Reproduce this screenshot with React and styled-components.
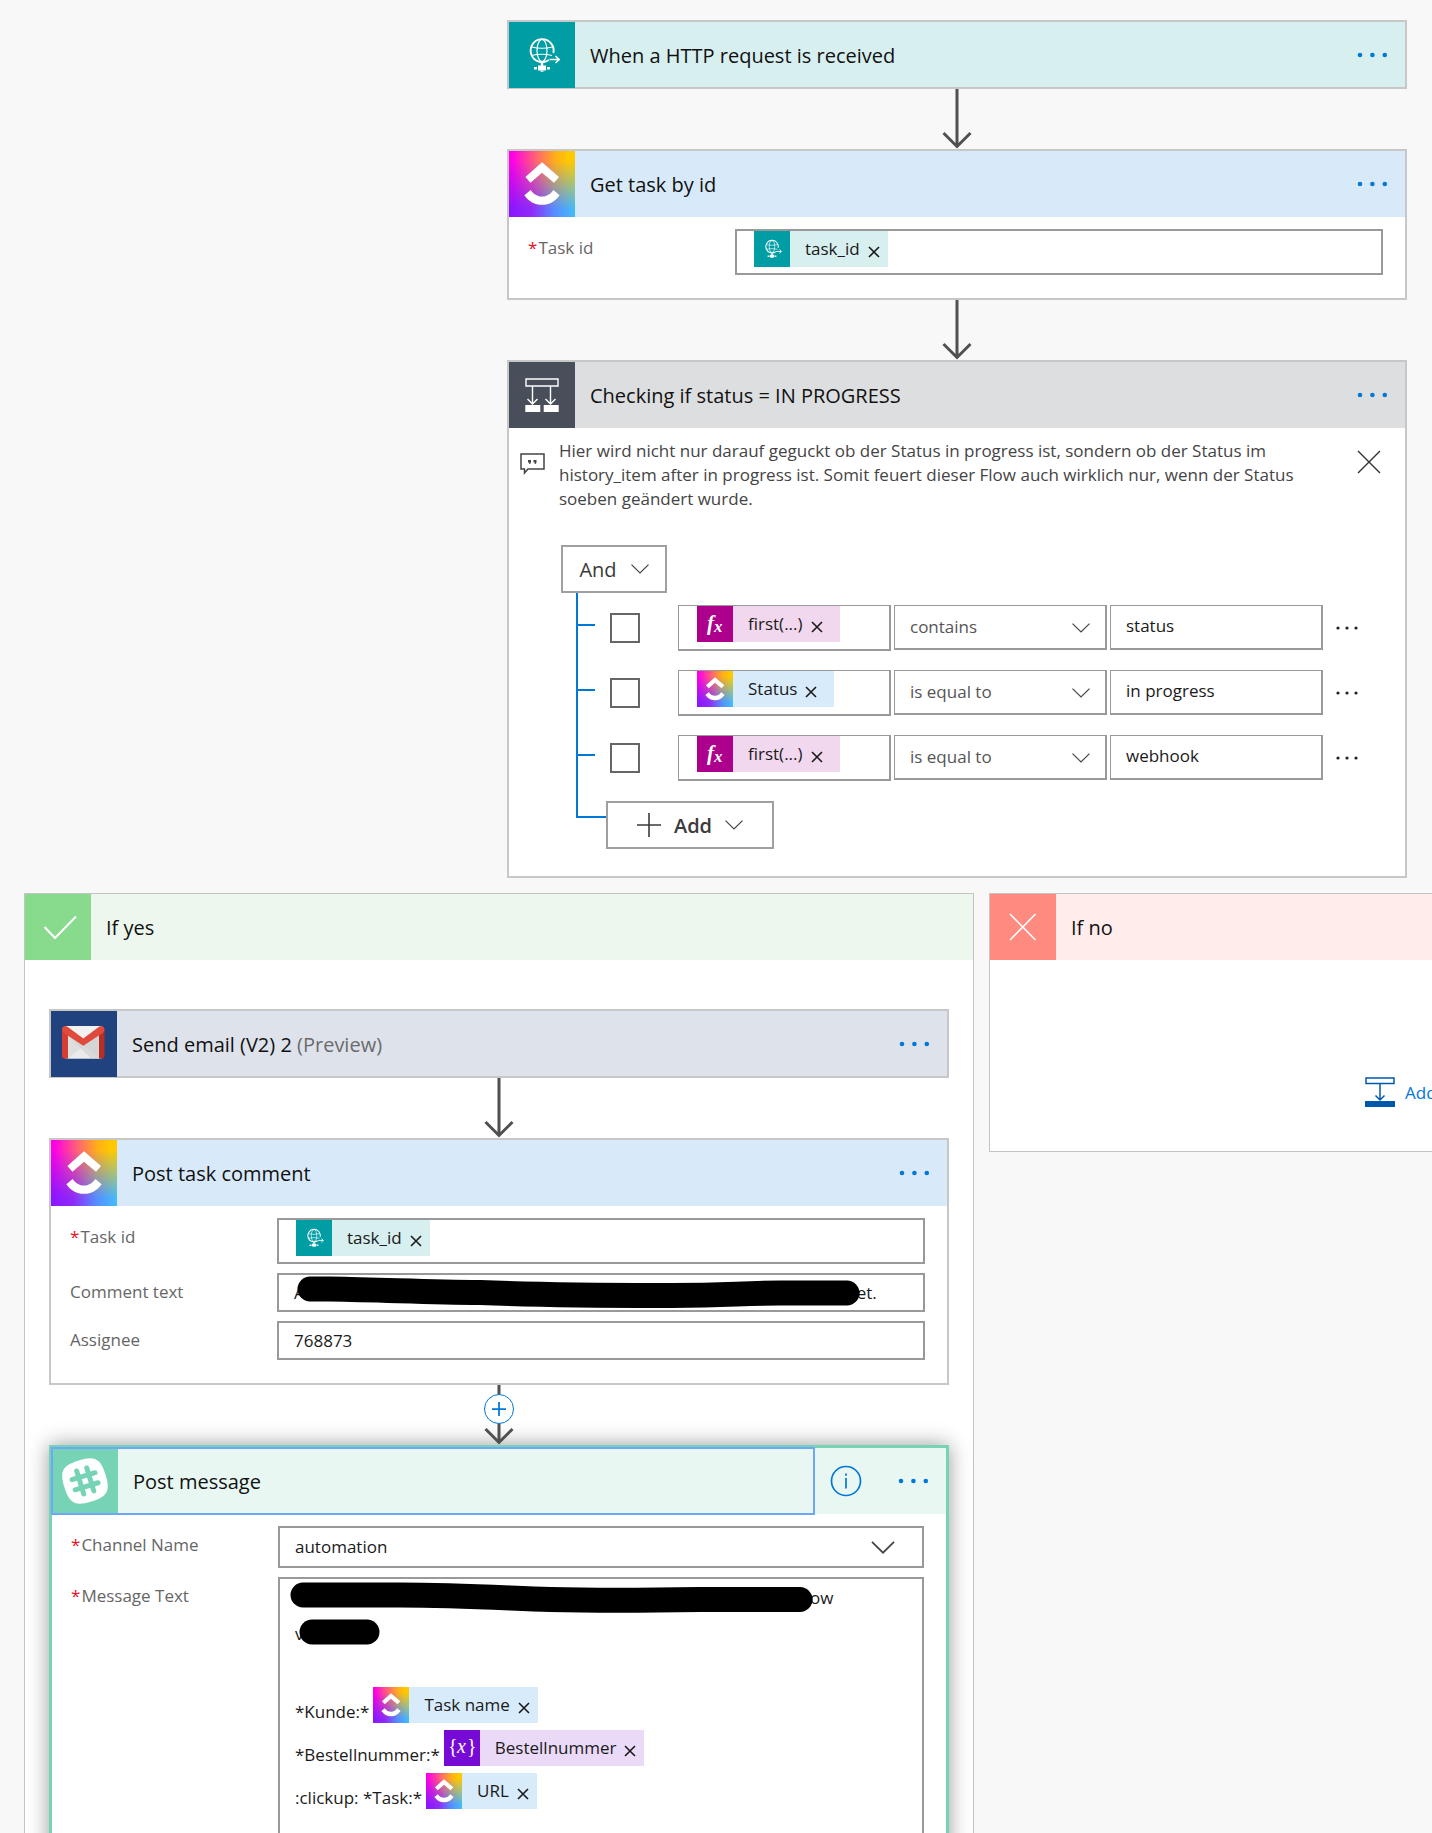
import React, { useState } from 'react';
import styled, { createGlobalStyle, css } from 'styled-components';

const GlobalStyle = createGlobalStyle`
  * {
    box-sizing: border-box;
  }

  body {
    margin: 0;
    background-color: #f8f8f8;
    color: #1a1a1a;
    font-family: 'Open Sans', 'Noto Sans', sans-serif;
    font-size: 17px;
  }

  button, input, select {
    font: inherit;
    color: inherit;
    margin: 0;
  }
`;

const Viewport = styled.main`
  height: 100vh;
  overflow: auto;
  scrollbar-width: none;
`;

const Canvas = styled.div`
  display: flex;
  flex-direction: column;
  width: max-content;
  min-width: 100%;
  padding: 20px 24px;
`;

const Steps = styled.div`
  display: flex;
  flex-direction: column;
  align-items: center;
`;

const Card = styled.section`
  width: 900px;
  background-color: #fff;
  border: 2px solid #c7c7c7;

  ${({ $active }) => $active && css`
    border: 3px solid #77d3b5;
    box-shadow: 0 0 20px rgba(0, 0, 0, 0.4);
  `}
`;

const CardHeader = styled.header`
  display: flex;
  align-items: center;
  height: ${({ $flat }) => ($flat ? '65px' : '66px')};
  padding-right: 15px;
  background-color: ${({ $color }) => $color};
`;

const HeaderToggle = styled.button`
  display: flex;
  flex: 1;
  align-items: center;
  align-self: stretch;
  padding: 0;
  border: none;
  background: none;
  text-align: left;
  cursor: pointer;

  ${({ $focused }) => $focused && css`
    outline: 2px solid #6ea6fa;
    outline-offset: -1px;
    margin-right: 16px;
  `}
`;

const IconBox = styled.span`
  display: flex;
  flex: none;
  align-items: center;
  justify-content: center;
  width: ${({ $size }) => $size || 66}px;
  height: ${({ $size }) => $size || 66}px;
  background-color: ${({ $color }) => $color};

  svg {
    width: 100%;
    height: 100%;
  }
`;

const GradientBox = styled(IconBox)`
  position: relative;
  background: linear-gradient(to right, #8a14ff 0%, #8f2cf8 35%, #558cff 68%, #45bdfa 100%);

  &::before {
    content: '';
    position: absolute;
    inset: 0;
    background: linear-gradient(to right, #ff00e6 5%, #ff6f66 45%, #ffae18 70%, #ffc800 90%);
    mask-image: linear-gradient(to bottom, #000 15%, transparent 88%);
  }

  svg {
    position: relative;
  }
`;

const Title = styled.span`
  padding: 2px 0 0 15px;
  font-size: 20px;
  line-height: 28px;
  color: #111;
`;

const Muted = styled.span`
  color: #6b6b6b;
`;

const IconButton = styled.button`
  display: flex;
  align-items: center;
  justify-content: center;
  padding: 0;
  border: none;
  background: none;
  color: ${({ $color }) => $color || '#0078d7'};
  cursor: pointer;
`;

const InfoButton = styled(IconButton)`
  margin-right: 35px;
`;

const CardBody = styled.div`
  display: flex;
  flex-direction: column;
  gap: 9px;
  padding: 12px 22px 23px 19px;
`;

const FieldRow = styled.div`
  display: flex;
  align-items: flex-start;
`;

const FieldLabel = styled.label`
  width: 207px;
  flex: none;
  padding-top: 8px;
  line-height: 22px;
  color: #666;
`;

const Required = styled.span`
  padding-right: 1px;
  color: #e81123;
`;

const boxStyle = css`
  flex: 1;
  min-width: 0;
  border: 2px solid #999;
  border-radius: 0;
  background-color: #fff;
`;

const TextInput = styled.input`
  ${boxStyle}
  height: 39px;
  padding: 0 15px;
`;

const TokenField = styled.div`
  ${boxStyle}
  display: flex;
  align-items: flex-start;
  height: 46px;
  padding-left: 17px;
`;

const LineField = styled.div`
  ${boxStyle}
  height: 39px;
  padding: 0 15px;
  line-height: 35px;
`;

const MessageField = styled.div`
  ${boxStyle}
  min-height: 420px;
  padding: 1px 15px;
`;

const MessageLine = styled.div`
  display: flex;
  align-items: center;
  height: 36px;
  line-height: 22px;
`;

const TokenLines = styled.div`
  margin-top: 28px;
`;

const TokenLine = styled.div`
  display: flex;
  align-items: flex-end;
  gap: 4px;
  height: 43px;
  line-height: 22px;
`;

const TokenPill = styled.span`
  display: inline-flex;
  align-items: center;
  height: 36px;
  padding-right: ${({ $roomy }) => ($roomy ? 17 : 8)}px;
  background-color: ${({ $color }) => $color};
`;

const TokenName = styled.span`
  padding: 0 8px 0 15px;
  line-height: 22px;
`;

const RemoveButton = styled(IconButton)`
  width: 12px;
  height: 12px;
  margin-top: 6px;
`;

const SelectWrap = styled.div`
  position: relative;
  display: flex;
  flex: 1;
  min-width: 0;
`;

const Select = styled.select`
  ${boxStyle}
  appearance: none;
  height: 42px;
  padding: 0 15px 2px;
`;

const SelectArrow = styled.span`
  position: absolute;
  top: 0;
  bottom: 0;
  right: ${({ $right }) => $right}px;
  display: flex;
  align-items: center;
  pointer-events: none;
`;

const ScribbleSvg = styled.svg`
  position: relative;
  flex: none;
  vertical-align: top;
  margin-left: ${({ $overlap }) => -$overlap}px;
  margin-right: -3px;
`;

const ArrowWrap = styled.div`
  position: relative;
  height: 60px;
`;

const InsertButton = styled.button`
  position: absolute;
  top: 9px;
  left: 50%;
  display: flex;
  align-items: center;
  justify-content: center;
  width: 30px;
  height: 30px;
  margin-left: -15px;
  padding: 0;
  border: 1px solid #0078d7;
  border-radius: 50%;
  background-color: #fff;
  color: #0078d7;
`;

const Note = styled.div`
  display: flex;
  align-items: flex-start;
  padding: 11px 24px 34px 11px;
`;

const NoteText = styled.p`
  flex: 1;
  margin: 0 53px 0 14px;
  line-height: 24px;
  color: #444;
`;

const NoteIcon = styled.span`
  display: flex;
  padding-top: 14px;
`;

const NoteClose = styled(IconButton)`
  padding-top: 11px;
`;

const ConditionGroup = styled.div`
  padding: 0 46px 27px 52px;
`;

const OutlineButton = styled.button`
  display: flex;
  align-items: center;
  justify-content: center;
  gap: ${({ $gap }) => $gap}px;
  width: ${({ $width }) => $width}px;
  height: 48px;
  padding: 0;
  border: 2px solid #a0a0a0;
  background-color: #fff;
  color: #3b3b3b;
  font-size: 20px;
  font-weight: ${({ $strong }) => ($strong ? 600 : 400)};
`;

const Rows = styled.div`
  display: flex;
  flex-direction: column;
  gap: 19px;
  margin-left: 15px;
  padding: 12px 0 20px;
  border-left: 2px solid #0078d7;
`;

const ConditionRow = styled.div`
  display: flex;
  align-items: center;
`;

const Tick = styled.span`
  align-self: flex-start;
  width: 17px;
  height: 2px;
  margin-top: 19px;
  background-color: #0078d7;
`;

const CheckBox = styled.input`
  appearance: none;
  width: 30px;
  height: 30px;
  margin: 0 38px 0 15px;
  border: 2px solid #666;
  background-color: #fff;
`;

const Operands = styled.div`
  display: grid;
  flex: 1;
  grid-template-columns: repeat(3, 1fr);
  align-items: start;
  gap: 3px;
  margin-right: 12px;
`;

const OperandTokens = styled(TokenField)`
  border-width: 1px 2px 2px 1px;
  padding-left: 18px;
`;

const OperandSelect = styled(Select)`
  height: 45px;
  border-width: 1px 2px 2px 1px;
  color: #555;
`;

const OperandInput = styled(TextInput)`
  height: 45px;
  padding: 0 15px 4px;
  border-width: 1px 2px 2px 1px;
`;

const AddRow = styled.div`
  display: flex;
  margin-left: 15px;
`;

const Elbow = styled.span`
  width: 30px;
  height: 17px;
  border-left: 2px solid #0078d7;
  border-bottom: 2px solid #0078d7;
`;

const Branches = styled.div`
  display: flex;
  align-items: flex-start;
  gap: 15px;
  margin-top: 15px;
`;

const Branch = styled.section`
  flex: 1;
  min-width: ${({ $minWidth }) => $minWidth}px;
  border: 1px solid #c4c4c4;
  background-color: #fff;
`;

const BranchHeader = styled.header`
  display: flex;
  align-items: center;
  background-color: ${({ $color }) => $color};
`;

const BranchBody = styled.div`
  padding: 49px 24px 44px;
`;

const AddAction = styled.button`
  display: flex;
  align-items: center;
  gap: 10px;
  margin: 68px auto 0;
  padding: 0;
  border: none;
  background: none;
  color: #0078d7;
`;

const MoreDots = () => (
  <svg width="34" height="8" viewBox="0 0 34 8" fill="currentColor">
    <circle cx="4" cy="4" r="2.3" />
    <circle cx="16.4" cy="4" r="2.3" />
    <circle cx="28.8" cy="4" r="2.3" />
  </svg>
);

const SmallDots = () => (
  <svg width="24" height="6" viewBox="0 0 24 6" fill="currentColor">
    <circle cx="3" cy="3" r="1.6" />
    <circle cx="12" cy="3" r="1.6" />
    <circle cx="21" cy="3" r="1.6" />
  </svg>
);

const Chevron = ({ size = 18, strokeWidth = 1.2 }) => (
  <svg width={size} height={size / 2 + 1} viewBox="0 0 18 10" fill="none" stroke="#444" strokeWidth={strokeWidth}>
    <path d="M0.5 0.6 9 9 17.5 0.6" />
  </svg>
);

const Cross = ({ size, strokeWidth }) => (
  <svg width={size} height={size} viewBox={`0 0 ${size} ${size}`} fill="none" stroke="currentColor" strokeWidth={strokeWidth}>
    <path d={`M1 1 ${size - 1} ${size - 1}M${size - 1} 1 1 ${size - 1}`} />
  </svg>
);

const Plus = ({ size, strokeWidth }) => (
  <svg width={size} height={size} viewBox="0 0 24 24" fill="none" stroke="currentColor" strokeWidth={strokeWidth}>
    <path d="M12 0v24M0 12h24" />
  </svg>
);

const GlobeIcon = () => (
  <svg viewBox="0 0 66 66" fill="none" stroke="#fff" strokeWidth="1.2">
    <path d="M39.8 38A11.5 11.5 0 1 1 44.4 31" strokeWidth="1.9" />
    <ellipse cx="33" cy="28.5" rx="5" ry="11" />
    <path d="M22.5 25Q33 27.5 43.5 25M22.5 33.5Q33 31 43 33.5" />
    <path d="M40.5 37.5H50M46.5 34 50.2 37.5 46.5 41" strokeWidth="1.6" />
    <path d="M33 40v4" strokeWidth="2.4" />
    <path d="M29 43.5h8v5h-8zM25 45h3v2.6h-3zM38 45h3v2.6h-3z" fill="#fff" stroke="none" />
    <path d="M31.5 48.5h3v1.2h-3z" fill="#fff" stroke="none" />
  </svg>
);

const ClickUpGlyph = () => (
  <svg viewBox="0 0 66 66" fill="#fff">
    <path d="M33 11.3 50 26 45 31.8 33 21.7 21.5 31.8 16.4 26Z" />
    <path d="M15.4 44.2 21.7 39C24.5 43.2 28.5 45.6 33 45.6S41.6 43.2 44.4 39L50.6 44.2C46.2 50.6 40.2 53.8 33 53.8S19.8 50.6 15.4 44.2Z" />
  </svg>
);

const ConditionIcon = () => (
  <svg viewBox="0 0 66 66" fill="none" stroke="#fff" strokeWidth="1.4">
    <path d="M17 17h32v7H17z" />
    <path d="M23.5 24v18M18.5 37l5 5 5-5M41.5 24v18M36.5 37l5 5 5-5" />
    <path d="M16.3 43h15v7h-15zM34.7 43h15v7h-15z" fill="#fff" stroke="none" />
  </svg>
);

const GmailIcon = () => (
  <svg viewBox="0 0 66 66">
    <path d="M14 15h37v32.5H14z" fill="#dedede" />
    <path d="M16.5 47.5 33 35l16 12.5z" fill="#ebebeb" />
    <path d="M16.5 24 40 47.5h9V23L33 34z" fill="#cfcfcf" opacity="0.6" />
    <path d="M14 15h36L32.5 28z" fill="#f2f2f2" />
    <path d="M11 18.5V45a2.5 2.5 0 0 0 2.5 2.5H17V22z" fill="#d43d31" />
    <path d="M53.5 18.5V45a2.5 2.5 0 0 1-2.5 2.5h-3V22z" fill="#b52f25" />
    <path d="M11 18.5c0-3.5 3-4.5 5.500-2.800L32.300 27.500 48 15.700c2.500-1.700 5.500-.7 5.500 2.800 0 1.500-.8 2.700-1.800 3.500L32.300 34.800 12.800 22C11.700 21.200 11 20 11 18.500z" fill="#e04a3c" />
  </svg>
);

const SlackIcon = () => (
  <svg viewBox="0 0 66 66">
    <g transform="rotate(-17 33 33)">
      <path d="M33 11.5C50 11.5 54.5 16 54.5 33S50 54.5 33 54.5 11.5 50 11.5 33 16 11.5 33 11.5z" fill="#fff" />
      <path d="M28 21v24M38.5 21v24M21 28h24M21 38.5h24" stroke="#77d3b5" strokeWidth="5" strokeLinecap="round" />
    </g>
  </svg>
);

const CheckIcon = () => (
  <svg viewBox="0 0 66 66" fill="none" stroke="#fff" strokeWidth="2">
    <path d="M19.5 33 30 44 51 22.5" />
  </svg>
);

const RejectIcon = () => (
  <svg viewBox="0 0 66 66" fill="none" stroke="#fff" strokeWidth="1.6">
    <path d="M20 20 45.5 46M45.5 20 20 46" />
  </svg>
);

const FunctionIcon = () => (
  <svg viewBox="0 0 36 36" fill="#fff" fontFamily="'Liberation Serif', serif" fontStyle="italic" fontWeight="700">
    <text x="10" y="24" fontSize="21">f</text>
    <text x="17" y="26" fontSize="17">x</text>
  </svg>
);

const VariableIcon = () => (
  <svg viewBox="0 0 36 36" fill="#fff" fontFamily="'Liberation Serif', serif">
    <text x="4" y="23" fontSize="20">{'{'}</text>
    <text x="13" y="23" fontSize="20" fontStyle="italic">x</text>
    <text x="23" y="23" fontSize="20">{'}'}</text>
  </svg>
);

const CommentIcon = () => (
  <svg width="25" height="22" viewBox="0 0 25 22" fill="none" stroke="#444" strokeWidth="1.5">
    <path d="M1 1h23v15H8l-3.5 4V16H1z" />
    <path d="M8 7h3v2.5l-1 1.5H9L9.5 9.5H8zM13.5 7h3v2.5l-1 1.5h-1l.5-1.5h-1.5z" fill="#444" stroke="none" />
  </svg>
);

const InfoIcon = () => (
  <svg width="32" height="32" viewBox="0 0 32 32" fill="none" stroke="currentColor" strokeWidth="1.7">
    <circle cx="16" cy="16" r="14.5" />
    <path d="M16 13v10.5M16 8.5v2.2" />
  </svg>
);

const ActionIcon = () => (
  <svg width="30" height="30" viewBox="0 0 30 30" fill="none" stroke="#0058ad" strokeWidth="1.5">
    <path d="M1 1h28v5.5H1zM15 7v16M10.5 18.5 15 23l4.5-4.5" />
    <path d="M0 24h30v6H0z" fill="#0058ad" stroke="none" />
  </svg>
);

const Scribble = ({ width, d, overlap }) => (
  <ScribbleSvg width={width} height="35" viewBox={`0 0 ${width} 35`} $overlap={overlap} aria-hidden="true">
    <path d={d} fill="none" stroke="#000" strokeWidth="25" strokeLinecap="round" strokeLinejoin="round" />
  </ScribbleSvg>
);

const Arrow = ({ insertable }) => (
  <ArrowWrap>
    <svg width="32" height="60" viewBox="0 0 32 60" fill="none" stroke="#505050" strokeWidth="3">
      <path d="M16 0v57M2.5 44 16 57.5 29.5 44" />
    </svg>
    {insertable && (
      <InsertButton aria-label="Insert a new step">
        <Plus size={14} strokeWidth={3} />
      </InsertButton>
    )}
  </ArrowWrap>
);

const tokenKinds = {
  http: { color: '#d8eff0', icon: <IconBox $size={36} $color="#009da5"><GlobeIcon /></IconBox> },
  clickup: { color: '#d8ebfb', icon: <GradientBox $size={36}><ClickUpGlyph /></GradientBox> },
  fx: { color: '#f2d8ee', icon: <IconBox $size={36} $color="#ad008c"><FunctionIcon /></IconBox> },
  variable: { color: '#ebdaf7', icon: <IconBox $size={36} $color="#770bd6"><VariableIcon /></IconBox> },
};

const Token = ({ kind, name, roomy }) => (
  <TokenPill $color={tokenKinds[kind].color} $roomy={roomy}>
    {tokenKinds[kind].icon}
    <TokenName>{name}</TokenName>
    <RemoveButton $color="#1a1a1a" aria-label={`Remove ${name}`}>
      <Cross size={12} strokeWidth={1.6} />
    </RemoveButton>
  </TokenPill>
);

const StepHeader = ({ color, icon, title, note, flat, focused }) => (
  <CardHeader $color={color} $flat={flat}>
    <HeaderToggle $focused={focused}>
      {icon}
      <Title>
        {title} {note && <Muted>{note}</Muted>}
      </Title>
    </HeaderToggle>
    {focused && (
      <InfoButton aria-label="Information">
        <InfoIcon />
      </InfoButton>
    )}
    <IconButton aria-label={`Menu for ${title}`}>
      <MoreDots />
    </IconButton>
  </CardHeader>
);

const Label = ({ id, htmlFor, required, children }) => (
  <FieldLabel id={id} htmlFor={htmlFor}>
    {required && <Required>*</Required>}
    {children}
  </FieldLabel>
);

const initialConditions = [
  { kind: 'fx', name: 'first(...)', operator: 'contains', value: 'status' },
  { kind: 'clickup', name: 'Status', operator: 'is equal to', value: 'in progress' },
  { kind: 'fx', name: 'first(...)', operator: 'is equal to', value: 'webhook' },
];

const Condition = ({ condition, onChange }) => (
  <ConditionRow>
    <Tick />
    <CheckBox type="checkbox" aria-label={`Select condition ${condition.value}`} />
    <Operands>
      <OperandTokens role="textbox" aria-label="Left operand">
        <Token kind={condition.kind} name={condition.name} roomy />
      </OperandTokens>
      <SelectWrap>
        <OperandSelect
          aria-label="Operator"
          value={condition.operator}
          onChange={(e) => onChange({ ...condition, operator: e.target.value })}
        >
          <option>contains</option>
          <option>is equal to</option>
        </OperandSelect>
        <SelectArrow $right={17}><Chevron /></SelectArrow>
      </SelectWrap>
      <OperandInput
        aria-label="Right operand"
        value={condition.value}
        onChange={(e) => onChange({ ...condition, value: e.target.value })}
      />
    </Operands>
    <IconButton $color="#222" aria-label="Condition menu">
      <SmallDots />
    </IconButton>
  </ConditionRow>
);

const clickUpIcon = <GradientBox><ClickUpGlyph /></GradientBox>;

const App = () => {
  const [conditions, setConditions] = useState(initialConditions);
  const [assignee, setAssignee] = useState('768873');

  const updateCondition = (index, next) => {
    setConditions(conditions.map((item, i) => (i === index ? next : item)));
  };

  return (
    <Viewport>
      <GlobalStyle />
      <Canvas>
        <Steps>
          <Card>
            <StepHeader
              flat
              color="#d8eff0"
              icon={<IconBox $color="#009da5"><GlobeIcon /></IconBox>}
              title="When a HTTP request is received"
            />
          </Card>
          <Arrow />
          <Card>
            <StepHeader color="#d8eafa" icon={clickUpIcon} title="Get task by id" />
            <CardBody>
              <FieldRow>
                <Label id="get-task-id" required>Task id</Label>
                <TokenField role="textbox" aria-labelledby="get-task-id">
                  <Token kind="http" name="task_id" />
                </TokenField>
              </FieldRow>
            </CardBody>
          </Card>
          <Arrow />
          <Card>
            <StepHeader
              color="#dddee0"
              icon={<IconBox $color="#484f5a"><ConditionIcon /></IconBox>}
              title="Checking if status = IN PROGRESS"
            />
            <Note>
              <NoteIcon><CommentIcon /></NoteIcon>
              <NoteText>
                Hier wird nicht nur darauf geguckt ob der Status in progress ist, sondern ob der Status im
                history_item after in progress ist. Somit feuert dieser Flow auch wirklich nur, wenn der Status
                soeben geändert wurde.
              </NoteText>
              <NoteClose $color="#333" aria-label="Close note">
                <Cross size={24} strokeWidth={1.4} />
              </NoteClose>
            </Note>
            <ConditionGroup>
              <OutlineButton $width={106} $gap={14}>
                And <Chevron />
              </OutlineButton>
              <Rows>
                {conditions.map((condition, index) => (
                  <Condition
                    key={index}
                    condition={condition}
                    onChange={(next) => updateCondition(index, next)}
                  />
                ))}
              </Rows>
              <AddRow>
                <Elbow />
                <OutlineButton $width={168} $gap={13} $strong>
                  <Plus size={24} strokeWidth={1.6} /> Add <Chevron />
                </OutlineButton>
              </AddRow>
            </ConditionGroup>
          </Card>
        </Steps>

        <Branches>
          <Branch $minWidth={950}>
            <BranchHeader $color="#edf7ee">
              <IconBox $color="#88da8d"><CheckIcon /></IconBox>
              <Title>If yes</Title>
            </BranchHeader>
            <BranchBody>
              <Steps>
                <Card>
                  <StepHeader
                    flat
                    color="#dee2eb"
                    icon={<IconBox $color="#20427f"><GmailIcon /></IconBox>}
                    title="Send email (V2) 2"
                    note="(Preview)"
                  />
                </Card>
                <Arrow />
                <Card>
                  <StepHeader color="#d8eafa" icon={clickUpIcon} title="Post task comment" />
                  <CardBody>
                    <FieldRow>
                      <Label id="comment-task-id" required>Task id</Label>
                      <TokenField role="textbox" aria-labelledby="comment-task-id">
                        <Token kind="http" name="task_id" />
                      </TokenField>
                    </FieldRow>
                    <FieldRow>
                      <Label id="comment-text">Comment text</Label>
                      <LineField role="textbox" aria-labelledby="comment-text">
                        A
                        <Scribble
                          width={563}
                          overlap={8}
                          d="M13 14H33C90 15 130 17 183 17.5C240 20 300 20.5 363 20.5C430 21 440 18 483 18H550"
                        />
                        et.
                      </LineField>
                    </FieldRow>
                    <FieldRow>
                      <Label htmlFor="assignee">Assignee</Label>
                      <TextInput id="assignee" value={assignee} onChange={(e) => setAssignee(e.target.value)} />
                    </FieldRow>
                  </CardBody>
                </Card>
                <Arrow insertable />
                <Card $active>
                  <StepHeader
                    focused
                    color="#e9f7f3"
                    icon={<IconBox $color="#77d3b5"><SlackIcon /></IconBox>}
                    title="Post message"
                  />
                  <CardBody>
                    <FieldRow>
                      <Label htmlFor="channel" required>Channel Name</Label>
                      <SelectWrap>
                        <Select id="channel" defaultValue="automation">
                          <option>automation</option>
                        </Select>
                        <SelectArrow $right={29}><Chevron size={24} strokeWidth={1.3} /></SelectArrow>
                      </SelectWrap>
                    </FieldRow>
                    <FieldRow>
                      <Label id="message-text" required>Message Text</Label>
                      <MessageField role="textbox" aria-multiline="true" aria-labelledby="message-text">
                        <MessageLine>
                          <Scribble
                            width={523}
                            overlap={5}
                            d="M13 14H110C170 14 215 17 260 18.5C320 20 380 19 410 18.5H510"
                          />
                          ow
                        </MessageLine>
                        <MessageLine>
                          v
                          <Scribble width={81} overlap={5} d="M13 15H68" />
                        </MessageLine>
                        <TokenLines>
                          <TokenLine>
                            *Kunde:* <Token kind="clickup" name="Task name" />
                          </TokenLine>
                          <TokenLine>
                            *Bestellnummer:* <Token kind="variable" name="Bestellnummer" />
                          </TokenLine>
                          <TokenLine>
                            :clickup: *Task:* <Token kind="clickup" name="URL" />
                          </TokenLine>
                        </TokenLines>
                      </MessageField>
                    </FieldRow>
                  </CardBody>
                </Card>
              </Steps>
            </BranchBody>
          </Branch>
          <Branch $minWidth={901}>
            <BranchHeader $color="#ffeceb">
              <IconBox $color="#ff8a80"><RejectIcon /></IconBox>
              <Title>If no</Title>
            </BranchHeader>
            <BranchBody>
              <AddAction>
                <ActionIcon />
                Add an action
              </AddAction>
            </BranchBody>
          </Branch>
        </Branches>
      </Canvas>
    </Viewport>
  );
};

export default App;
